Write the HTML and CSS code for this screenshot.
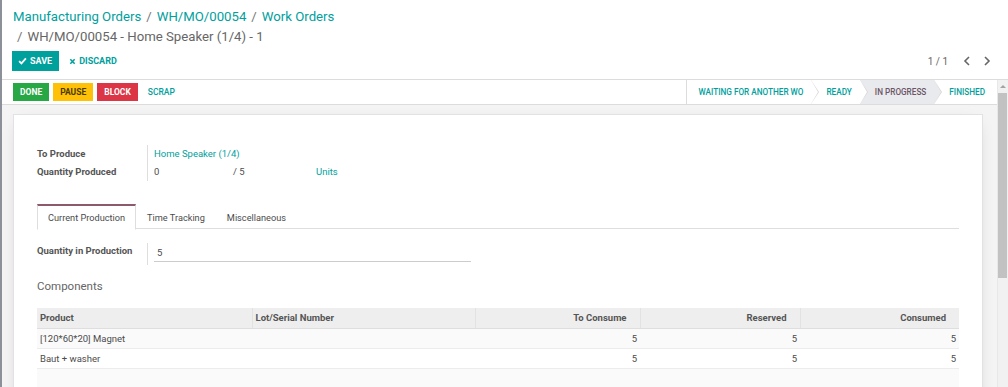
FILE: index.html
```html
<!DOCTYPE html>
<html lang="en">
<head>
    <meta charset="UTF-8">
    <title>WH/MO/00054 - Home Speaker (1/4) - 1</title>
    <link rel="stylesheet" href="styles.css">
</head>
<body>
<div class="app">
    <div class="control-panel">
        <div class="breadcrumb">
            <div class="crumb-line">
                <a href="#">Manufacturing Orders</a><span class="sep">/</span><a href="#">WH/MO/00054</a><span class="sep">/</span><a href="#">Work Orders</a>
            </div>
            <div class="crumb-line active">
                <span class="sep first">/</span>WH/MO/00054 - Home Speaker (1/4) - 1
            </div>
        </div>
        <div class="cp-bottom">
            <div class="cp-buttons">
                <button class="btn-save">
                    <svg width="9" height="8" viewBox="0 0 10 9"><path d="M1.2 4.6 L3.8 7.2 L8.8 1.6" fill="none" stroke="#fff" stroke-width="2"/></svg>
                    SAVE
                </button>
                <button class="btn-discard">
                    <svg width="7" height="7" viewBox="0 0 8 8"><path d="M1.5 1.5 L6.5 6.5 M6.5 1.5 L1.5 6.5" fill="none" stroke="#00a09d" stroke-width="1.8"/></svg>
                    DISCARD
                </button>
            </div>
            <div class="pager">
                <span class="pager-value">1 / 1</span>
                <button class="pager-btn"><svg width="8" height="10" viewBox="0 0 8 10"><path d="M6 1 L2 5 L6 9" fill="none" stroke="#666" stroke-width="1.6"/></svg></button>
                <button class="pager-btn"><svg width="8" height="10" viewBox="0 0 8 10"><path d="M2 1 L6 5 L2 9" fill="none" stroke="#666" stroke-width="1.6"/></svg></button>
            </div>
        </div>
    </div>

    <div class="main">
        <div class="content">
            <div class="status-row">
                <div class="actions">
                    <button class="btn-action done">DONE</button>
                    <button class="btn-action pause">PAUSE</button>
                    <button class="btn-action block">BLOCK</button>
                    <button class="btn-link">SCRAP</button>
                </div>
                <div class="statusbar">
                    <div class="status-item">WAITING FOR ANOTHER WO</div>
                    <div class="status-item">READY</div>
                    <div class="status-item active">IN PROGRESS</div>
                    <div class="status-item">FINISHED</div>
                </div>
            </div>

            <div class="sheet">
                <div class="group">
                    <div class="label">To Produce</div>
                    <div class="value"><a href="#">Home Speaker (1/4)</a></div>
                    <div class="label">Quantity Produced</div>
                    <div class="value">
                        <span class="qty-done">0</span><span class="qty-total">/ 5</span><a href="#">Units</a>
                    </div>
                </div>

                <div class="tabs">
                    <div class="tab active">Current Production</div>
                    <div class="tab">Time Tracking</div>
                    <div class="tab">Miscellaneous</div>
                </div>

                <div class="tab-pane">
                    <div class="group single">
                        <div class="label">Quantity in Production</div>
                        <div class="value"><div class="input">5</div></div>
                    </div>

                    <div class="separator">Components</div>

                    <table class="list">
                        <thead>
                            <tr>
                                <th class="col-product">Product</th>
                                <th class="col-lot">Lot/Serial Number</th>
                                <th class="num col-consume">To Consume</th>
                                <th class="num col-reserved">Reserved</th>
                                <th class="num">Consumed</th>
                            </tr>
                        </thead>
                        <tbody>
                            <tr>
                                <td>[120*60*20] Magnet</td>
                                <td></td>
                                <td class="num">5</td>
                                <td class="num">5</td>
                                <td class="num">5</td>
                            </tr>
                            <tr>
                                <td>Baut + washer</td>
                                <td></td>
                                <td class="num">5</td>
                                <td class="num">5</td>
                                <td class="num">5</td>
                            </tr>
                            <tr class="empty">
                                <td></td><td></td><td></td><td></td><td></td>
                            </tr>
                        </tbody>
                    </table>
                </div>
            </div>
        </div>
        <div class="scrollbar">
            <div class="sb-arrow up"></div>
            <div class="sb-thumb"></div>
        </div>
    </div>
</div>
</body>
</html>
```

FILE: styles.css
```css
* {
    box-sizing: border-box;
}
html, body {
    margin: 0;
    height: 100%;
}
body {
    font-family: Roboto, "Noto Sans", Arial, sans-serif;
    font-size: 9.5px;
    color: #4c4c4c;
    background-color: #ffffff;
    overflow: hidden;
}
a {
    color: #00a09d;
    text-decoration: none;
}
button {
    font-family: inherit;
    border: none;
    cursor: pointer;
}
.app {
    height: 100vh;
    display: flex;
    flex-direction: column;
    border-left: 2px solid #8b9099;
}

/* control panel */
.control-panel {
    flex: none;
    height: 80px;
    border-bottom: 1px solid #dcdcdc;
    padding: 7px 0 0 10px;
}
.breadcrumb {
    font-size: 13.2px;
    line-height: 20px;
    margin-left: 1px;
}
.crumb-line.active {
    color: #666666;
}
.sep {
    color: #777777;
    padding: 0 5px;
}
.sep.first {
    padding-left: 4px;
}
.cp-bottom {
    display: flex;
    justify-content: space-between;
    align-items: center;
    margin-top: 4px;
    padding-right: 11px;
}
.cp-buttons {
    display: flex;
    align-items: center;
    gap: 4px;
}
.btn-save {
    height: 20px;
    padding: 0 7px 0 6px;
    background-color: #00a09d;
    color: #ffffff;
    font-size: 9px;
    font-weight: bold;
    display: flex;
    align-items: center;
    gap: 3px;
}
.btn-discard {
    height: 20px;
    padding: 0 6px;
    background: none;
    color: #00a09d;
    font-size: 9px;
    font-weight: bold;
    display: flex;
    align-items: center;
    gap: 3px;
}
.pager {
    display: flex;
    align-items: center;
    color: #666666;
}
.pager-value {
    font-size: 10px;
    margin-right: 9px;
}
.pager-btn {
    background: none;
    width: 20px;
    height: 20px;
    padding: 0;
    display: flex;
    align-items: center;
    justify-content: center;
}

/* main area */
.main {
    flex: 1;
    min-height: 0;
    display: flex;
}
.content {
    flex: 1;
    overflow: hidden;
    background-color: #f4f4f4;
}
.scrollbar {
    flex: none;
    width: 11px;
    display: flex;
    flex-direction: column;
    background-color: #f1f1f1;
    border-left: 1px solid #e8e8e8;
}
.sb-arrow {
    height: 13px;
    display: flex;
    align-items: center;
    justify-content: center;
}
.sb-arrow.up::before {
    content: "";
    border-left: 3px solid transparent;
    border-right: 3px solid transparent;
    border-bottom: 3px solid #a3a3a3;
}
.sb-thumb {
    height: 185px;
    margin: 0 1px 0 0;
    background-color: #c2c2c2;
}

.status-row {
    height: 25px;
    display: flex;
    justify-content: space-between;
    background-color: #ffffff;
    border-bottom: 1px solid #dcdcdc;
}
.actions {
    display: flex;
    align-items: center;
    gap: 4px;
    padding-left: 11px;
}
.btn-action {
    height: 18px;
    padding: 0 7px;
    font-size: 8.5px;
    font-weight: bold;
    color: #ffffff;
}
.btn-action.done {
    background-color: #28a745;
}
.btn-action.pause {
    background-color: #ffc107;
    color: #4a3b05;
}
.btn-action.block {
    background-color: #dc3545;
}
.btn-link {
    background: none;
    color: #00a09d;
    font-size: 8.5px;
    font-weight: 500;
    padding: 0 6px;
}
.statusbar {
    display: flex;
    border-left: 1px solid #dcdcdc;
}
.status-item {
    position: relative;
    height: 24px;
    line-height: 24px;
    padding: 0 8px 0 15px;
    font-size: 8.2px;
    font-weight: 500;
    color: #00a09d;
    background-color: #ffffff;
}
.status-item:first-child {
    padding-left: 12px;
}
.status-item:last-child {
    padding-right: 12px;
}
.status-item:not(:last-child)::before {
    content: "";
    position: absolute;
    top: 0;
    right: -8px;
    border-top: 12px solid transparent;
    border-bottom: 12px solid transparent;
    border-left: 8px solid #d6d6d6;
    z-index: 1;
}
.status-item:not(:last-child)::after {
    content: "";
    position: absolute;
    top: 0;
    right: -7px;
    border-top: 12px solid transparent;
    border-bottom: 12px solid transparent;
    border-left: 7px solid #ffffff;
    z-index: 2;
}
.status-item.active {
    background-color: #e8eaed;
    color: #6c5566;
}
.status-item.active::after {
    border-left-color: #e8eaed;
}

/* sheet */
.sheet {
    margin: 9px 14px 0 11px;
    background-color: #ffffff;
    border: 1px solid #e2e2e2;
    box-shadow: 0 4px 16px -8px rgba(0, 0, 0, 0.25);
    padding: 30px 23px 160px 23px;
}
.group {
    display: grid;
    grid-template-columns: 111px 1fr;
    grid-auto-rows: 18px;
    line-height: 18px;
}
.label {
    font-weight: bold;
    color: #555555;
    border-right: 1px solid #dedede;
}
.value {
    padding-left: 6px;
}
.qty-done {
    display: inline-block;
    width: 79px;
}
.qty-total {
    display: inline-block;
    width: 83px;
}
.tabs {
    display: flex;
    margin-top: 23px;
    border-bottom: 1px solid #dedede;
    height: 25px;
    font-size: 9.2px;
}
.tab {
    padding: 0 10px;
    line-height: 23px;
    border: 1px solid transparent;
    border-top-width: 2px;
    color: #4c4c4c;
}
.tab.active {
    border-color: #dedede;
    border-top-color: #8c5a6c;
    border-bottom-color: #ffffff;
    background-color: #ffffff;
    height: 26px;
}
.tab-pane {
    padding-top: 14px;
}
.group.single {
    grid-auto-rows: 22px;
    line-height: 16px;
}
.input {
    width: 317px;
    height: 19px;
    line-height: 20px;
    padding-left: 3px;
    border-bottom: 1px solid #cccccc;
}
.separator {
    margin-top: 13px;
    font-size: 11.5px;
    line-height: 16px;
    color: #666666;
}
.list {
    width: 100%;
    margin-top: 14px;
    border-collapse: collapse;
    font-size: 9.5px;
}
.list th {
    height: 20px;
    text-align: left;
    font-weight: bold;
    color: #555555;
    background-color: #eeeeee;
    padding: 0 3px;
    border-left: 1px solid #e2e2e2;
    border-bottom: 1px solid #dedede;
}
.list th:first-child {
    border-left: none;
}
.list th.num {
    text-align: right;
    padding-right: 13px;
}
.col-product {
    width: 215px;
}
.col-lot {
    width: 223px;
}
.col-consume {
    width: 165px;
}
.col-reserved {
    width: 160px;
}
.list td {
    height: 20px;
    padding: 0 3px;
    border-bottom: 1px solid #ececec;
}
.list td.num {
    text-align: right;
}
.list tbody tr:nth-child(odd) {
    background-color: #fafafa;
}
.list tr.empty {
    background-color: #f7f7f7;
}
```
